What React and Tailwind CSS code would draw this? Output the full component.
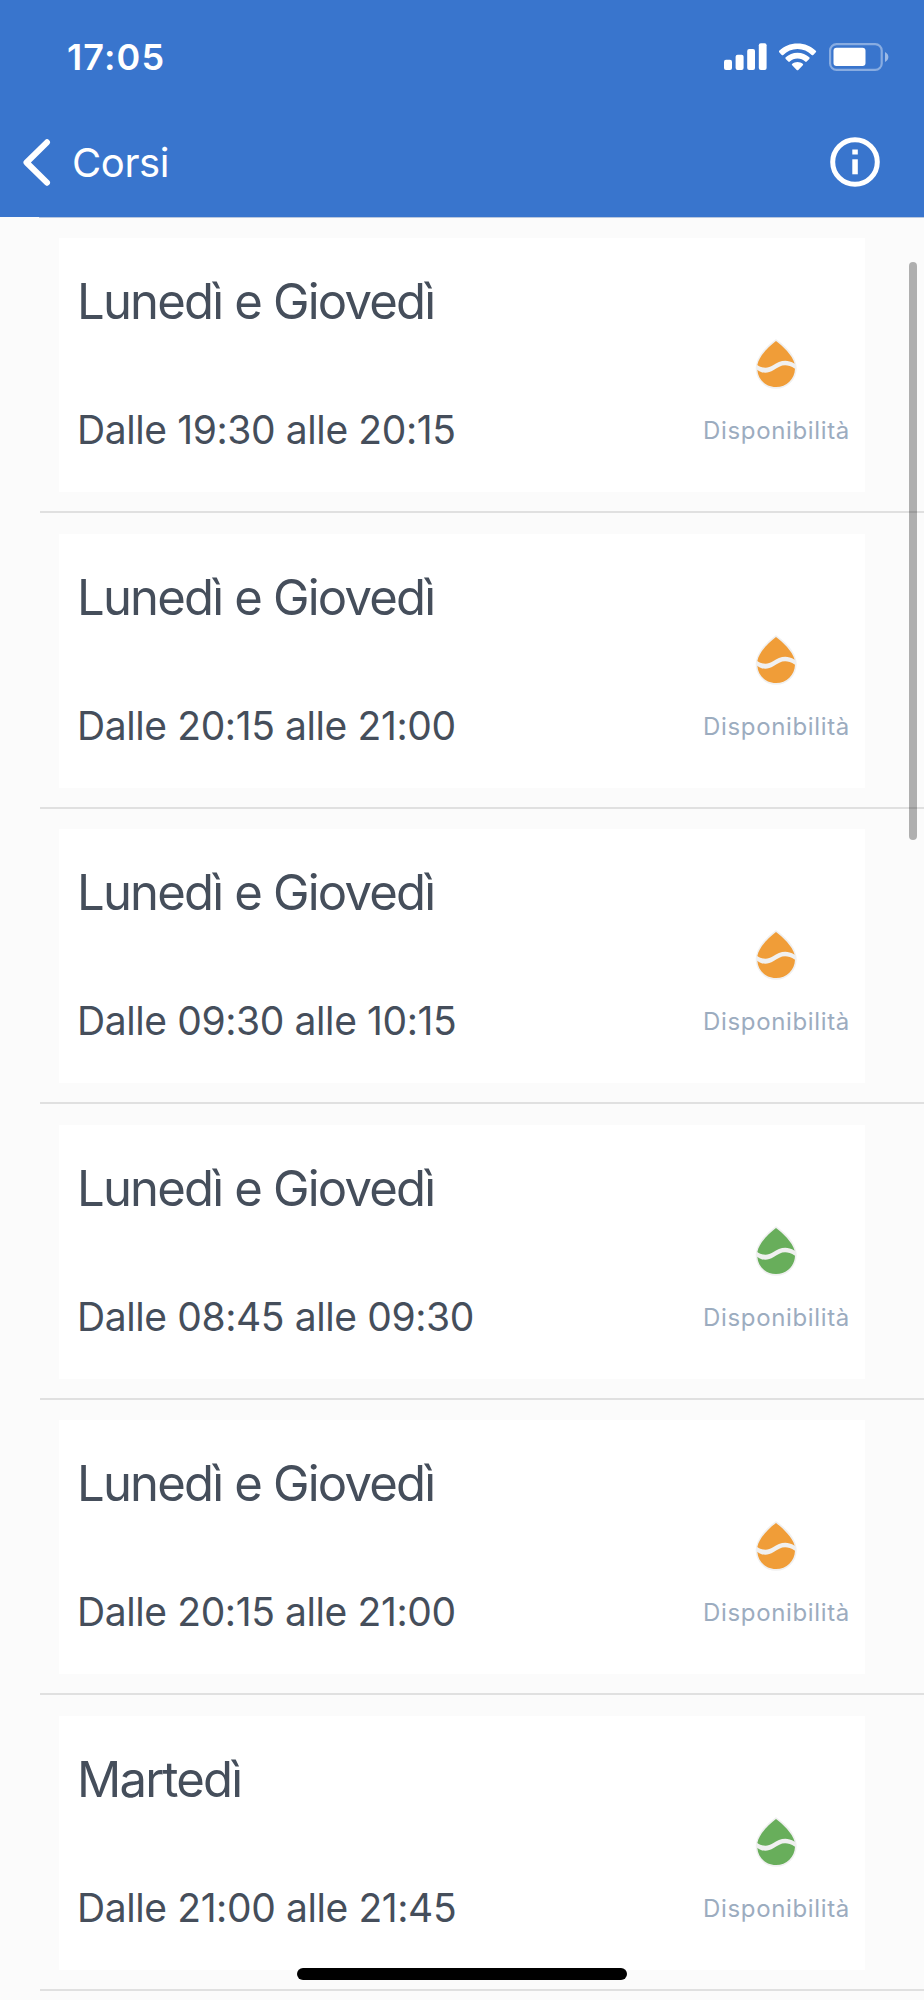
import clsx from 'clsx';

const COURSES = [
  { day: 'Lunedì e Giovedì', from: '19:30', to: '20:15', status: 'few' },
  { day: 'Lunedì e Giovedì', from: '20:15', to: '21:00', status: 'few' },
  { day: 'Lunedì e Giovedì', from: '09:30', to: '10:15', status: 'few' },
  { day: 'Lunedì e Giovedì', from: '08:45', to: '09:30', status: 'free' },
  { day: 'Lunedì e Giovedì', from: '20:15', to: '21:00', status: 'few' },
  { day: 'Martedì', from: '21:00', to: '21:45', status: 'free' },
];

const SignalIcon = () => (
  <svg className="w-[43px] h-[27px]" viewBox="0 0 43 27" fill="#fff">
    <rect x="0" y="16.7" width="8" height="10.3" rx="2" />
    <rect x="11.6" y="11.7" width="8" height="15.3" rx="2" />
    <rect x="23.2" y="6" width="7.8" height="21" rx="2" />
    <rect x="34.8" y="0.2" width="7.8" height="26.8" rx="2" />
  </svg>
);

const WifiIcon = () => (
  <svg className="w-[38px] h-[28px]" viewBox="0 0 38 28" fill="#fff">
    <path d="M18.500.4C25.700.4 32.200 3.100 36.800 7.700c.5.5.5 1.100 0 1.600l-2.500 2.600c-.5.5-1.100.5-1.600 0C29 8.300 24 6.100 18.500 6.100S8 8.300 4.300 11.900c-.5.5-1.100.5-1.600 0L.2 9.300c-.5-.5-.5-1.100 0-1.600C4.800 3.100 11.300.4 18.500.4Z" />
    <path d="M18.500 9.700c4.600 0 8.700 1.700 11.800 4.600.5.5.5 1.100 0 1.600l-2.600 2.600c-.5.5-1 .5-1.500 0-2.100-1.900-4.700-3-7.700-3s-5.600 1.100-7.700 3c-.5.5-1 .5-1.500 0l-2.600-2.600c-.5-.5-.5-1.100 0-1.600C9.800 11.400 13.900 9.700 18.500 9.700Z" />
    <path d="M18.500 18.900c2 0 3.800.7 5.200 1.800.6.5.6 1.100.1 1.600l-4.500 4.600c-.5.5-1.100.5-1.600 0l-4.500-4.600c-.5-.5-.5-1.100.1-1.600 1.400-1.100 3.200-1.800 5.200-1.800Z" />
  </svg>
);

const BatteryIcon = () => (
  <svg className="w-[61px] h-[28px]" viewBox="0 0 61 28">
    <rect x="1.1" y="1.1" width="51.6" height="25.8" rx="6.5" fill="none" stroke="#fff" strokeOpacity="0.4" strokeWidth="2.2" />
    <rect x="4.5" y="4.8" width="32" height="18.2" rx="3" fill="#fff" />
    <path d="M56 9c2 1 3.400 2.700 3.400 5s-1.400 4-3.400 5Z" fill="#fff" fillOpacity="0.5" />
  </svg>
);

const DropIcon = ({ status }) => (
  <svg className="w-[46px] h-[54px]" viewBox="40 24 138 162">
    <path
      d="M109 36C90 50 53 83 53 118a56.500 56.500 0 0 0 113 0C166 83 128 50 109 36Z"
      fill="#f0f0f0"
      stroke="#f0f0f0"
      strokeWidth="10"
      strokeLinejoin="round"
    />
    <g className={clsx(status === 'free' ? 'fill-[#68ae5b]' : 'fill-[#f09d38]')}>
      <path d="M109 36C90 50 59 79 53 108C63 116 83 121 100 109C119 97 138 88 165 104C158 78 128 50 109 36Z" />
      <path d="M53 122C66 133 83 135 102 123C122 110 137 101 166 119C165 150 141 174 109 174S55 151 53 122Z" />
    </g>
  </svg>
);

const CourseRow = ({ course }) => (
  <li className="h-[295.5px] ml-[39.5px] pl-[19.5px] pr-[59px] pt-[20.8px] border-b-2 border-[#e0e0e0]">
    <div className="h-[254px] bg-white flex justify-between pl-[18px] pr-[16px]">
      <div className="pt-[34px] text-[#454e5b]">
        <h2 className="text-[49px] leading-[60px] tracking-[-1.8px]">{course.day}</h2>
        <p className="mt-[74px] text-[39px] leading-[48px] tracking-[-0.4px]">
          Dalle {course.from} alle {course.to}
        </p>
      </div>
      <div className="pt-[99px] flex flex-col items-center">
        <DropIcon status={course.status} />
        <span className="mt-[25px] -mr-px text-[24px] leading-[30px] tracking-[0.65px] text-[#9cacbf]">Disponibilità</span>
      </div>
    </div>
  </li>
);

const App = () => {
  return (
    <div className="relative w-[924px] h-[2000px] overflow-hidden bg-[#fbfbfb] font-['Inter',sans-serif]">
      <header className="h-[216.5px] bg-[#3975cd] text-white">
        {/* STATUS BAR */}
        <div className="h-[108px] pl-[67px] pr-[34px] pt-[35px] flex justify-between items-start">
          <span className="text-[36px] leading-[44px] font-semibold tracking-[1.1px]">17:05</span>
          <div className="flex items-start gap-3 pt-[8px]">
            <SignalIcon />
            <WifiIcon />
            <BatteryIcon />
          </div>
        </div>

        {/* NAV BAR */}
        <div className="h-[108px] pl-[23px] pr-[44px] flex justify-between items-start">
          <div className="flex items-start">
            <svg className="w-[28px] h-[48px] mt-[30px]" viewBox="0 0 28 48" fill="none" stroke="#fff" strokeWidth="6" strokeLinecap="round" strokeLinejoin="round">
              <path d="M24 4.300 3.500 24.500 24 44.700" />
            </svg>
            <h1 className="ml-[21px] mt-[31px] text-[40px] leading-[48px] tracking-[-0.4px]">Corsi</h1>
          </div>
          <svg className="w-[50px] h-[50px] mt-[29px]" viewBox="0 0 50 50" fill="#fff">
            <circle cx="25" cy="25" r="22.3" fill="none" stroke="#fff" strokeWidth="5" />
            <rect x="22.3" y="12.5" width="5.5" height="5" />
            <rect x="22.3" y="22.3" width="5.5" height="15" />
          </svg>
        </div>
      </header>

      {/* COURSES */}
      <div className="h-px ml-[39px] bg-[#b9c8df]" />
      <ul>
        {COURSES.map((c, i) => <CourseRow key={i} course={c} />)}
      </ul>

      {/* scroll indicator */}
      <div className="absolute right-[7px] top-[262px] w-[8px] h-[578px] rounded-full bg-black/30" />

      {/* home indicator */}
      <div className="absolute left-[297px] bottom-[20px] w-[330px] h-[12px] rounded-full bg-black" />
    </div>
  );
};

export default App;
